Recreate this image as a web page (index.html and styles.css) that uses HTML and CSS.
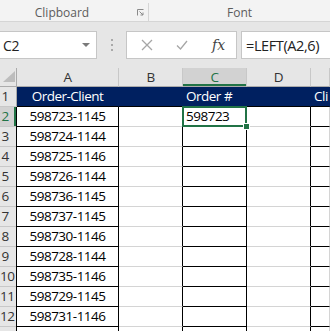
FILE: index.html
```html
<!DOCTYPE html>
<html lang="en">
<head>
    <meta charset="UTF-8">
    <title>Order numbers</title>
    <link rel="stylesheet" href="styles.css">
</head>
<body>
    <div class="ribbon">
        <div class="group clip">
            <span class="glabel">Clipboard</span>
            <svg class="launch" width="7" height="7" viewBox="0 0 7 7"><path d="M0.5 6.5V0.5H6.5" fill="none" stroke="#8a8a8a"/><path d="M2.5 2.5L6 6M6 3.5V6H3.5" fill="none" stroke="#8a8a8a"/></svg>
        </div>
        <div class="group fontgrp">
            <span class="glabel">Font</span>
        </div>
    </div>

    <div class="fbar">
        <div class="namebox">
            <span>C2</span>
            <span class="caret"></span>
        </div>
        <div class="grip"><i></i><i></i><i></i></div>
        <div class="btnbox">
            <svg class="fbtn" width="12" height="12" viewBox="0 0 12 12"><path d="M1 1L11 11M11 1L1 11" stroke="#a6a6a6" stroke-width="1.3"/></svg>
            <svg class="fbtn ok" width="12" height="10" viewBox="0 0 12 10"><path d="M1 5.5L4.5 9L11 1" fill="none" stroke="#a6a6a6" stroke-width="1.3"/></svg>
            <span class="fx">fx</span>
        </div>
        <div class="formula">=LEFT(A2,6)</div>
    </div>

    <div class="sheet">
        <div class="cell corner"><svg width="12" height="11" viewBox="0 0 12 11"><polygon points="12,0 12,11 0,11" fill="#bdbdbd"/></svg></div>
        <div class="cell ch">A</div>
        <div class="cell ch">B</div>
        <div class="cell ch sel">C</div>
        <div class="cell ch">D</div>
        <div class="cell ch"></div>

        <div class="cell rh">1</div>
        <div class="cell navy ctr">Order-Client</div>
        <div class="cell navy"></div>
        <div class="cell navy">Order #</div>
        <div class="cell navy"></div>
        <div class="cell navy">Cli</div>

        <div class="cell rh sel">2</div>
        <div class="cell bx ctr">598723-1145</div>
        <div class="cell bl"></div>
        <div class="cell bx active">598723</div>
        <div class="cell bl"></div>
        <div class="cell be"></div>

        <div class="cell rh">3</div>
        <div class="cell bx ctr">598724-1144</div>
        <div class="cell bl"></div>
        <div class="cell bx"></div>
        <div class="cell bl"></div>
        <div class="cell be"></div>

        <div class="cell rh">4</div>
        <div class="cell bx ctr">598725-1146</div>
        <div class="cell bl"></div>
        <div class="cell bx"></div>
        <div class="cell bl"></div>
        <div class="cell be"></div>

        <div class="cell rh">5</div>
        <div class="cell bx ctr">598726-1144</div>
        <div class="cell bl"></div>
        <div class="cell bx"></div>
        <div class="cell bl"></div>
        <div class="cell be"></div>

        <div class="cell rh">6</div>
        <div class="cell bx ctr">598736-1145</div>
        <div class="cell bl"></div>
        <div class="cell bx"></div>
        <div class="cell bl"></div>
        <div class="cell be"></div>

        <div class="cell rh">7</div>
        <div class="cell bx ctr">598737-1145</div>
        <div class="cell bl"></div>
        <div class="cell bx"></div>
        <div class="cell bl"></div>
        <div class="cell be"></div>

        <div class="cell rh">8</div>
        <div class="cell bx ctr">598730-1146</div>
        <div class="cell bl"></div>
        <div class="cell bx"></div>
        <div class="cell bl"></div>
        <div class="cell be"></div>

        <div class="cell rh">9</div>
        <div class="cell bx ctr">598728-1144</div>
        <div class="cell bl"></div>
        <div class="cell bx"></div>
        <div class="cell bl"></div>
        <div class="cell be"></div>

        <div class="cell rh">10</div>
        <div class="cell bx ctr">598735-1146</div>
        <div class="cell bl"></div>
        <div class="cell bx"></div>
        <div class="cell bl"></div>
        <div class="cell be"></div>

        <div class="cell rh">11</div>
        <div class="cell bx ctr">598729-1145</div>
        <div class="cell bl"></div>
        <div class="cell bx"></div>
        <div class="cell bl"></div>
        <div class="cell be"></div>

        <div class="cell rh">12</div>
        <div class="cell bx ctr">598731-1146</div>
        <div class="cell bl"></div>
        <div class="cell bx"></div>
        <div class="cell bl"></div>
        <div class="cell be"></div>

        <div class="cell rh"></div>
        <div class="cell bx ctr"></div>
        <div class="cell bl"></div>
        <div class="cell bx"></div>
        <div class="cell bl"></div>
        <div class="cell be"></div>
    </div>
</body>
</html>
```

FILE: styles.css
```css
body {
    margin: 0;
    height: 331px;
    overflow: hidden;
    background: #ffffff;
    font-family: 'Open Sans', 'Liberation Sans', sans-serif;
}
.ribbon {
    display: flex;
    height: 21px;
    background: #f3f3f3;
    border-bottom: 1px solid #d5d5d5;
}
.group {
    display: flex;
    align-items: center;
    height: 18px;
    margin-top: 3px;
    border-right: 1px solid #d5d5d5;
}
.clip {
    width: 148px;
}
.clip .glabel {
    width: 124px;
}
.launch {
    margin-left: 13px;
}
.fontgrp {
    width: 181px;
    border-right: none;
}
.fontgrp .glabel {
    width: 190px;
}
.glabel {
    text-align: center;
    font-size: 12px;
    color: #5c5c5c;
}
.fbar {
    display: flex;
    align-items: center;
    height: 46px;
    background: #e6e6e6;
}
.namebox,
.btnbox,
.formula {
    display: flex;
    align-items: center;
    box-sizing: border-box;
    height: 28px;
    background: #ffffff;
    border: 1px solid #c6c6c6;
}
.namebox {
    width: 97px;
    border-left: none;
    justify-content: space-between;
    padding: 0 6px 0 3px;
    font-size: 14px;
    letter-spacing: -0.3px;
    color: #222;
}
.caret {
    width: 0;
    height: 0;
    border-left: 4px solid transparent;
    border-right: 4px solid transparent;
    border-top: 4px solid #7a7a7a;
}
.grip {
    display: flex;
    flex-direction: column;
    gap: 3px;
    margin: 0 13px 0 14px;
}
.grip i {
    width: 2px;
    height: 2px;
    background: #a9a9a9;
}
.btnbox {
    width: 111px;
    padding-left: 14px;
}
.ok {
    margin-left: 23px;
}
.fx {
    margin-left: 24px;
    font-family: 'DejaVu Serif', 'Liberation Serif', serif;
    font-style: italic;
    font-size: 14px;
    color: #444;
}
.formula {
    flex: 1;
    min-width: 0;
    margin-left: 4px;
    border-right: none;
    padding-left: 4px;
    font-size: 14.5px;
    letter-spacing: -0.4px;
    color: #222;
    white-space: nowrap;
    overflow: hidden;
}
.sheet {
    display: grid;
    grid-template-columns: 17px 102px 64px 64px 64px 1fr;
    grid-template-rows: 19px;
    grid-auto-rows: 20px;
}
.cell {
    box-sizing: border-box;
    min-width: 0;
    border-right: 1px solid #d4d4d4;
    border-bottom: 1px solid #d4d4d4;
    font-size: 13.5px;
    letter-spacing: -0.5px;
    line-height: 19px;
    color: #000;
    white-space: nowrap;
    overflow: hidden;
    padding-left: 3px;
}
.corner {
    display: flex;
    align-items: flex-end;
    justify-content: flex-end;
    padding: 0 1px 4px 0;
    background: #e6e6e6;
    border-bottom-color: #ababab;
    border-right-color: #ababab;
}
.ch {
    background: #e6e6e6;
    text-align: center;
    padding-left: 0;
    color: #333;
    border-bottom-color: #ababab;
    border-right-color: #c8c8c8;
}
.ch.sel,
.rh.sel {
    background: #d2d2d2;
    color: #217346;
}
.ch.sel {
    box-shadow: inset 0 -2px 0 #217346;
}
.rh {
    background: #e6e6e6;
    color: #333;
    text-align: center;
    padding: 0 6px 0 0;
    border-right-color: #ababab;
    border-bottom-color: #c8c8c8;
}
.rh.sel {
    box-shadow: inset -2px 0 0 #217346;
}
.navy {
    background: #002060;
    color: #ffffff;
    border-right-color: #002060;
    border-bottom-color: #000;
}
.ctr {
    text-align: center;
    padding-left: 0;
}
.bx {
    border-right-color: #000;
    border-bottom-color: #000;
}
.bx.ctr {
    box-shadow: -1px 0 0 #000;
}
.bl {
    border-right-color: #000;
}
.be {
    border-bottom-color: #000;
}
.active {
    position: relative;
    overflow: visible;
}
.active::after {
    content: "";
    position: absolute;
    left: -1px;
    top: -1px;
    right: -1px;
    bottom: -1px;
    border: 2px solid #217346;
}
.active::before {
    content: "";
    position: absolute;
    right: -4px;
    bottom: -4px;
    width: 5px;
    height: 5px;
    background: #217346;
    border: 1px solid #fff;
    z-index: 1;
}
```
